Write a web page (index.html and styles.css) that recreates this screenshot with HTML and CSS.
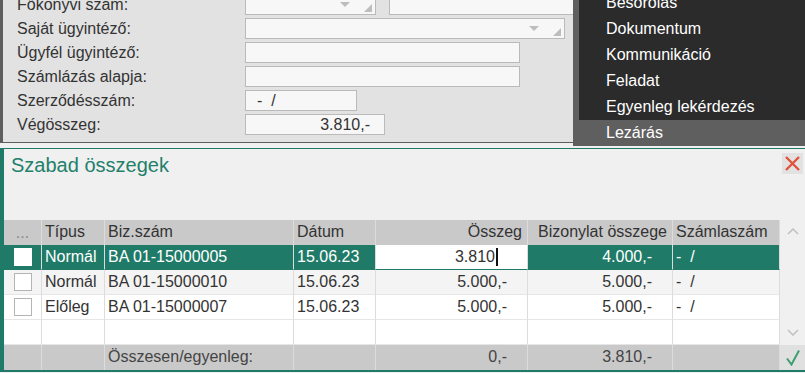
FILE: index.html
```html
<!DOCTYPE html>
<html lang="hu">
<head>
    <meta charset="UTF-8">
    <meta name="viewport" content="width=device-width, initial-scale=1.0">
    <title>Szabad összegek</title>
    <link rel="stylesheet" href="styles.css">
</head>
<body>
    <div class="form-panel">
        <div class="form">
            <div class="form-row">
                <span class="label">Főkönyvi szám:</span>
                <div class="field combo field-account"><span class="arrow"></span><span class="grip"></span></div>
                <div class="field field-account-name"></div>
            </div>
            <div class="form-row">
                <span class="label">Saját ügyintéző:</span>
                <div class="field combo field-wide"><span class="arrow"></span><span class="grip"></span></div>
            </div>
            <div class="form-row">
                <span class="label">Ügyfél ügyintéző:</span>
                <div class="field field-text"></div>
            </div>
            <div class="form-row">
                <span class="label">Számlázás alapja:</span>
                <div class="field field-text"></div>
            </div>
            <div class="form-row">
                <span class="label">Szerződésszám:</span>
                <div class="field field-contract">-&nbsp;&nbsp;/</div>
            </div>
            <div class="form-row">
                <span class="label">Végösszeg:</span>
                <div class="field field-amount">3.810,-</div>
            </div>
        </div>
    </div>

    <ul class="menu">
        <li>Besorolás</li>
        <li>Dokumentum</li>
        <li>Kommunikáció</li>
        <li>Feladat</li>
        <li>Egyenleg lekérdezés</li>
        <li class="active">Lezárás</li>
    </ul>

    <div class="panel">
        <div class="panel-head">
            <h2 class="panel-title">Szabad összegek</h2>
            <button class="close-btn" type="button">
                <svg width="15" height="15" viewBox="0 0 15 15">
                    <path d="M1 1 L14 14 M14 1 L1 14" stroke="#e0533d" stroke-width="2.4" fill="none"/>
                </svg>
            </button>
        </div>

        <div class="grid-wrap">
            <div class="grid">
                <div class="grid-row head">
                    <div class="cell center dots">...</div>
                    <div class="cell">Típus</div>
                    <div class="cell">Biz.szám</div>
                    <div class="cell">Dátum</div>
                    <div class="cell right">Összeg</div>
                    <div class="cell right">Bizonylat összege</div>
                    <div class="cell">Számlaszám</div>
                </div>

                <div class="grid-row selected">
                    <div class="cell center"><span class="check"></span></div>
                    <div class="cell">Normál</div>
                    <div class="cell">BA 01-15000005</div>
                    <div class="cell">15.06.23</div>
                    <div class="cell right editing">3.810<span class="caret"></span></div>
                    <div class="cell right num">4.000,-</div>
                    <div class="cell">-&nbsp;&nbsp;/</div>
                </div>

                <div class="grid-row alt">
                    <div class="cell center"><span class="check"></span></div>
                    <div class="cell">Normál</div>
                    <div class="cell">BA 01-15000010</div>
                    <div class="cell">15.06.23</div>
                    <div class="cell right num">5.000,-</div>
                    <div class="cell right num">5.000,-</div>
                    <div class="cell">-&nbsp;&nbsp;/</div>
                </div>

                <div class="grid-row">
                    <div class="cell center"><span class="check"></span></div>
                    <div class="cell">Előleg</div>
                    <div class="cell">BA 01-15000007</div>
                    <div class="cell">15.06.23</div>
                    <div class="cell right num">5.000,-</div>
                    <div class="cell right num">5.000,-</div>
                    <div class="cell">-&nbsp;&nbsp;/</div>
                </div>

                <div class="grid-row">
                    <div class="cell"></div>
                    <div class="cell"></div>
                    <div class="cell"></div>
                    <div class="cell"></div>
                    <div class="cell"></div>
                    <div class="cell"></div>
                    <div class="cell"></div>
                </div>

                <div class="grid-row foot">
                    <div class="cell"></div>
                    <div class="cell"></div>
                    <div class="cell">Összesen/egyenleg:</div>
                    <div class="cell"></div>
                    <div class="cell right num">0,-</div>
                    <div class="cell right num">3.810,-</div>
                    <div class="cell"></div>
                </div>
            </div>

            <div class="scroll">
                <div class="scroll-up">
                    <svg width="12" height="7" viewBox="0 0 12 7">
                        <polyline points="1,6 6,1 11,6" stroke="#c2c2c2" stroke-width="1.6" fill="none"/>
                    </svg>
                </div>
                <div class="scroll-track">
                    <svg width="12" height="7" viewBox="0 0 12 7">
                        <polyline points="1,1 6,6 11,1" stroke="#c2c2c2" stroke-width="1.6" fill="none"/>
                    </svg>
                </div>
                <div class="confirm">
                    <svg width="14" height="17" viewBox="0 0 14 17">
                        <polyline points="1,9.5 5.5,15.5 13,1.5" stroke="#3d9f6d" stroke-width="2" fill="none"/>
                    </svg>
                </div>
            </div>
        </div>
    </div>
</body>
</html>
```

FILE: styles.css
```css
:root {
    --teal: #1f7b68;
    --title-color: #23806b;
    --panel-bg: #f0f0f0;
    --form-bg: #e2e2e2;
    --field-bg: #f7f7f7;
    --field-border: #bababa;
    --head-bg: #c9c9c9;
    --line: #dcdcdc;
    --text: #333;
    --menu-bg: #2b2b2b;
    --menu-active: #5f5f5f;
}

* {
    box-sizing: border-box;
}

body {
    margin: 0;
    width: 805px;
    height: 373px;
    overflow: hidden;
    position: relative;
    background: var(--panel-bg);
    font-family: "Liberation Sans", Arial, sans-serif;
    font-size: 16px;
    color: var(--text);
}

/* upper form */

.form-panel {
    height: 143px;
    background: var(--form-bg);
    border-left: 3px solid #5e5e5e;
    border-bottom: 1px solid #5e5e5e;
    padding-left: 14px;
    overflow: hidden;
}

.form {
    display: flex;
    flex-direction: column;
    gap: 3px;
    margin-top: -6px;
}

.form-row {
    display: flex;
    align-items: center;
    height: 21px;
}

.label {
    width: 228px;
    flex-shrink: 0;
    line-height: 21px;
}

.field {
    position: relative;
    flex-shrink: 0;
    height: 21px;
    line-height: 19px;
    padding: 0 11px;
    background: var(--field-bg);
    border: 1px solid var(--field-border);
    white-space: nowrap;
}

.field-account { width: 131px; }
.field-account-name { width: 250px; margin-left: 13px; }
.field-wide { width: 320px; }
.field-text { width: 275px; }
.field-contract { width: 112px; }

.field-amount {
    width: 140px;
    text-align: right;
    padding-right: 14px;
}

.combo .arrow {
    position: absolute;
    right: 25px;
    top: 7px;
    border-left: 5px solid transparent;
    border-right: 5px solid transparent;
    border-top: 5px solid #bdbdbd;
}

.combo .grip {
    position: absolute;
    right: 3px;
    bottom: 2px;
    border-left: 8px solid transparent;
    border-bottom: 8px solid #bdbdbd;
}

/* context menu */

.menu {
    position: absolute;
    top: 0;
    left: 573px;
    width: 232px;
    height: 146px;
    margin: 0;
    padding: 0;
    list-style: none;
    overflow: hidden;
    background: var(--menu-active);
    color: #fff;
}

.menu li {
    height: 26px;
    line-height: 26px;
    margin-left: 6px;
    padding-left: 27px;
    background: var(--menu-bg);
}

.menu li:first-child {
    margin-top: -10px;
}

.menu li.active {
    margin-left: 0;
    padding-left: 33px;
    background: transparent;
}

/* lower panel */

.panel {
    margin-top: 5px;
    border-top: 1px solid var(--teal);
    border-left: 4px solid var(--teal);
    border-bottom: 2px solid var(--teal);
}

.panel-head {
    height: 71px;
    display: flex;
    justify-content: space-between;
    align-items: flex-start;
}

.panel-title {
    margin: 0;
    padding: 4px 0 0 7px;
    font-size: 20px;
    font-weight: normal;
    line-height: 24px;
    color: var(--title-color);
}

.close-btn {
    width: 21px;
    height: 21px;
    margin: 4px 2px 0 0;
    padding: 0;
    border: 0;
    background: #e2e2e2;
    display: flex;
    align-items: center;
    justify-content: center;
}

.grid-wrap {
    display: flex;
}

.grid {
    width: 776px;
}

.grid-row {
    display: grid;
    grid-template-columns: 38px 63px 189px 82px 152px 145px 107px;
    height: 25px;
    background: #fff;
}

.cell {
    height: 25px;
    line-height: 24px;
    padding: 0 3px;
    border-right: 1px solid var(--line);
    border-bottom: 1px solid #e6e6e6;
    white-space: nowrap;
    overflow: hidden;
}

.cell.right { text-align: right; padding-right: 5px; }
.cell.num { padding-right: 20px; }
.cell.center { display: flex; align-items: center; justify-content: center; }

.head,
.foot {
    background: var(--head-bg);
}

.head .cell,
.foot .cell {
    border-bottom: 0;
}

.dots {
    color: #8a8a8a;
}

.alt {
    background: #f4f4f4;
}

.selected {
    background: var(--teal);
    color: #fff;
}

.selected .cell {
    border-bottom-color: var(--teal);
}

.selected .editing {
    background: #fff;
    color: var(--text);
    padding-right: 29px;
}

.caret {
    display: inline-block;
    width: 2px;
    height: 18px;
    margin-left: 1px;
    background: #111;
    vertical-align: -4px;
}

.check {
    width: 18px;
    height: 18px;
    background: #fff;
    border: 1px solid #b4b4b4;
}

.selected .check {
    border-color: #fff;
}

.foot {
    color: #444;
}

/* right scroll column */

.scroll {
    width: 25px;
    display: flex;
    flex-direction: column;
}

.scroll-up {
    height: 25px;
    display: flex;
    align-items: center;
    justify-content: center;
    padding-bottom: 2px;
}

.scroll-track {
    flex: 1;
    display: flex;
    align-items: flex-end;
    justify-content: center;
    padding-bottom: 9px;
}

.confirm {
    height: 25px;
    background: #e0e0e0;
    display: flex;
    align-items: center;
    justify-content: center;
}
```
